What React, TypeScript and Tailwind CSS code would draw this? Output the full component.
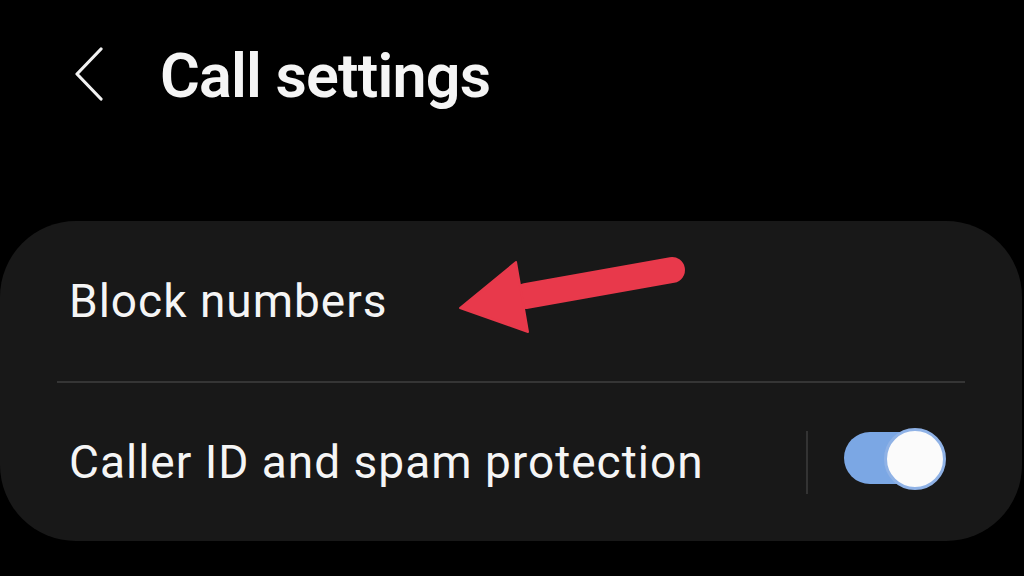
import React, { useState } from 'react';

// Call settings screen (One UI style)

function BackIcon() {
  return (
    <svg width="32" height="54" viewBox="0 0 32 54" fill="none" className="shrink-0">
      <path d="M28 2 L4 27 L28 52" stroke="#f2f2f2" strokeWidth="3.2" strokeLinecap="round" strokeLinejoin="round" />
    </svg>
  );
}

function Arrow() {
  // annotation drawn over the card
  return (
    <svg
      className="pointer-events-none absolute left-[440px] top-[26px]"
      width="270"
      height="100"
      viewBox="0 0 270 100"
    >
      <g transform="translate(-440 -247)">
        <line x1="526" y1="296" x2="672" y2="270" stroke="#e8394b" strokeWidth="26" strokeLinecap="round" />
        <polygon points="460,308 516,262 528,332" fill="#e8394b" stroke="#e8394b" strokeWidth="2" strokeLinejoin="round" />
      </g>
    </svg>
  );
}

function Toggle({ on, onChange }: { on: boolean; onChange: (v: boolean) => void }) {
  return (
    <button
      onClick={() => onChange(!on)}
      className="relative h-[62px] w-[102px] shrink-0"
      aria-pressed={on}
    >
      <span
        className={
          'absolute left-0 top-[4px] h-[52px] w-[96px] rounded-full ' +
          (on ? 'bg-[#7ba7e4]' : 'bg-[#555]')
        }
      />
      <span
        className={
          'absolute top-0 h-[62px] w-[62px] rounded-full border-[3px] border-[#8fb2e6] bg-[#fbfbfb] ' +
          (on ? 'left-[40px]' : 'left-0')
        }
      />
    </button>
  );
}

export default function App() {
  const [callerId, setCallerId] = useState(true);

  return (
    <div
      className="h-[576px] w-[1024px] overflow-hidden bg-black text-[#f5f5f5]"
      style={{ fontFamily: 'Roboto, "Noto Sans", "Liberation Sans", sans-serif' }}
    >
      {/* Header */}
      <div className="flex h-[150px] items-start pt-[47px]">
        <div className="ml-[73px] flex h-[54px] items-center">
          <BackIcon />
        </div>
        <h1 className="ml-[55px] pt-[1px] text-[61px] font-semibold leading-[56px] tracking-[-0.8px]">Call settings</h1>
      </div>

      {/* Card */}
      <div className="mt-[71px] w-[1022px] rounded-[76px] bg-[#181818]">
        <div className="relative flex h-[160px] items-center pl-[69px]">
          <span className="text-[46px] leading-none tracking-[1px]">Block numbers</span>
          <Arrow />
        </div>
        <div className="mx-[57px] h-[2px] bg-[#353535]" />
        <div className="flex h-[158px] items-center pl-[69px] pr-[76px]">
          <span className="flex-1 text-[46px] leading-none tracking-[1px]">Caller ID and spam protection</span>
          <div className="h-[63px] w-[2px] bg-[#333]" />
          <div className="ml-[36px]">
            <Toggle on={callerId} onChange={setCallerId} />
          </div>
        </div>
      </div>
    </div>
  );
}
